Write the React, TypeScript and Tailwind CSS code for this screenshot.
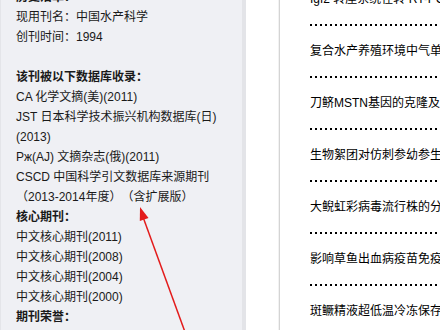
const leftLines: { text: string; bold?: boolean; cjk?: boolean }[] = [
  { text: "历史沿革：", bold: true },
  { text: "现用刊名：中国水产科学" },
  { text: "创刊时间：1994" },
  { text: "" },
  { text: "该刊被以下数据库收录：", bold: true },
  { text: "CA 化学文摘(美)(2011)" },
  { text: "JST 日本科学技术振兴机构数据库(日)" },
  { text: "(2013)" },
  { text: "Рж(AJ) 文摘杂志(俄)(2011)" },
  { text: "CSCD 中国科学引文数据库来源期刊" },
  { text: "（2013-2014年度）（含扩展版）" },
  { text: "核心期刊：", bold: true },
  { text: "中文核心期刊(2011)" },
  { text: "中文核心期刊(2008)" },
  { text: "中文核心期刊(2004)" },
  { text: "中文核心期刊(2000)" },
  { text: "期刊荣誉：", bold: true },
];

const articles = [
  "Igf2 转座系统在转 RT-PCR 检测",
  "复合水产养殖环境中气单胞菌",
  "刀鲚MSTN基因的克隆及表达",
  "生物絮团对仿刺参幼参生长",
  "大鲵虹彩病毒流行株的分离",
  "影响草鱼出血病疫苗免疫效果",
  "斑鳜精液超低温冷冻保存",
];

const font = "font-['Liberation_Sans','Noto_Sans_CJK_SC',sans-serif]";

export default function App() {
  return (
    <div
      className={`relative flex w-[440px] h-[330px] overflow-hidden bg-white text-[12px] text-[#1a1a1a] [text-spacing-trim:space-all] ${font}`}>
      {/* side panel */}
      <div className="w-[246px] shrink-0 bg-[#eff0f4] border-l border-[#e4e5e9] border-r-4 border-r-[#e3e4e8]">
        <div className="-mt-[13px] pl-[15px] leading-[20px]">
          {leftLines.map((l, i) => (
            <div
              key={i}
              className={`h-[20px] whitespace-nowrap ${l.bold ? "font-bold" : ""}`}>
              {l.text}
            </div>
          ))}
        </div>
      </div>
      <div className="w-[33px] shrink-0 border-r border-[#f2f2f2]" />

      {/* article list */}
      <div className="flex-1 min-w-0 border-l border-[#d4d4d4] pl-[30px] overflow-hidden">
        <div className="-mt-[14px]">
          {articles.map((a, i) => (
            <div key={i}>
              <div className="h-[26px] flex items-center whitespace-nowrap text-black">
                {a}
              </div>
              <div className="h-[26px] flex items-center">
                <div className="h-[2px] w-full bg-[linear-gradient(to_right,#000_2px,transparent_2px)] bg-[length:5px_2px]" />
              </div>
            </div>
          ))}
        </div>
      </div>

      {/* red annotation arrow */}
      <svg
        className="absolute inset-0 pointer-events-none"
        width="440"
        height="330"
        viewBox="0 0 440 330">
        <line x1="143" y1="217" x2="185" y2="332" stroke="#e31b1b" strokeWidth="1.5" />
        <polygon points="140,207 148.5,218 139.8,221" fill="#e31b1b" />
      </svg>
    </div>
  );
}
